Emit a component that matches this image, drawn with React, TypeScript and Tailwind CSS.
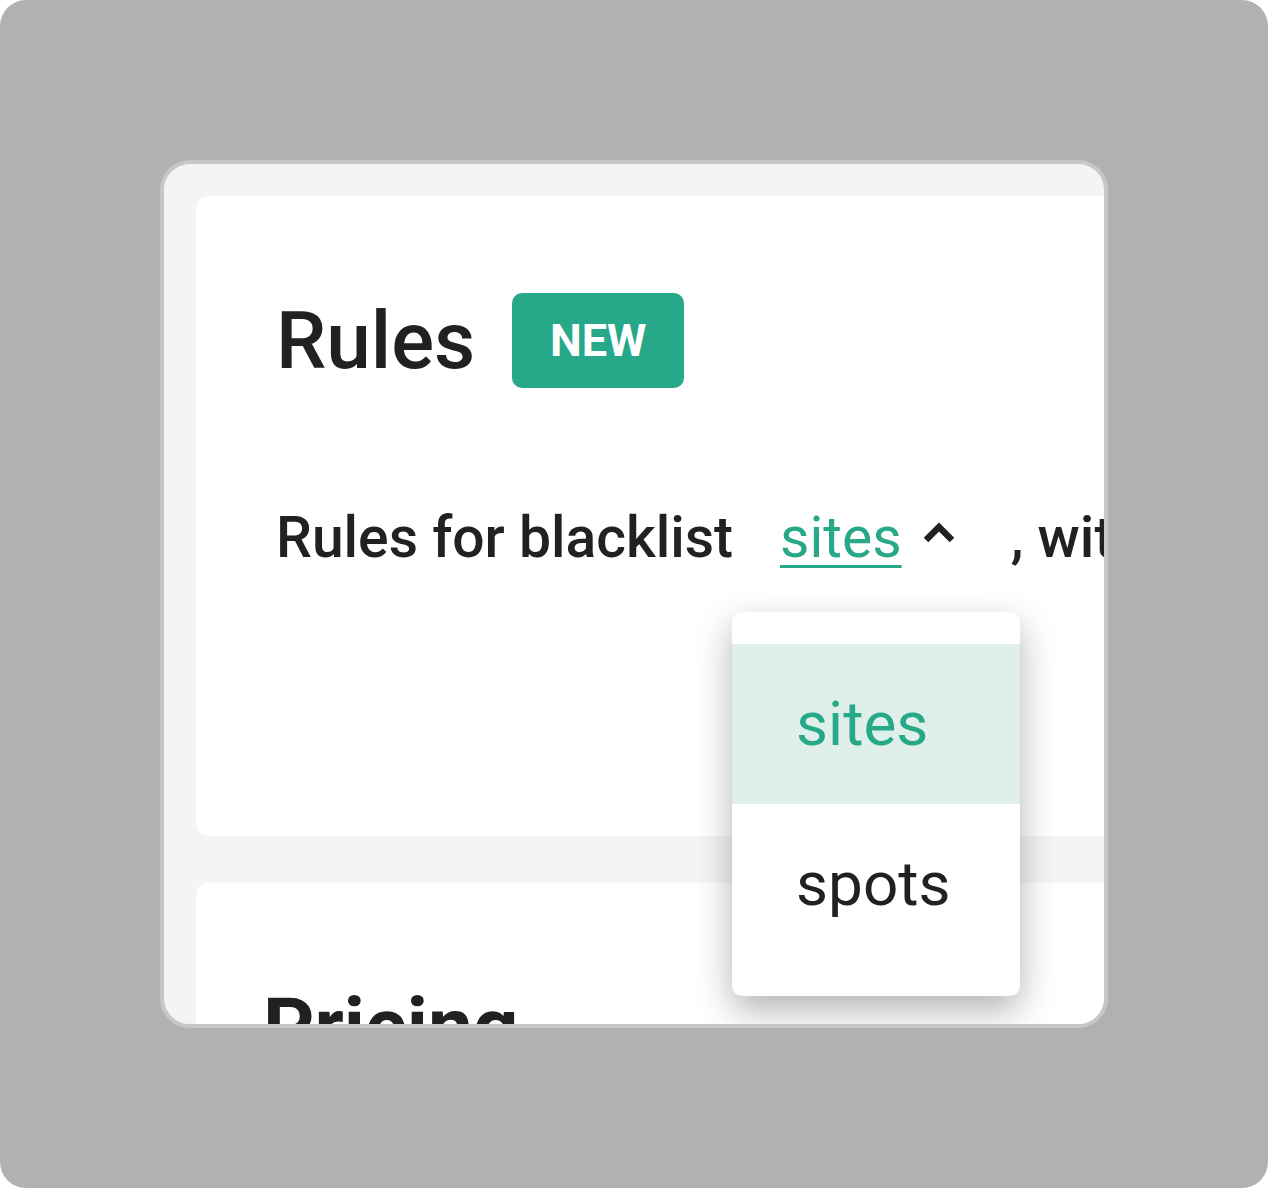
export default function App() {
  return (
    <div className="w-[1268px] h-[1188px] bg-white" style={{ fontFamily: "Roboto, 'Liberation Sans', sans-serif" }}>
      <div className="w-full h-full rounded-[26px] bg-[#b0b1b3] p-[160px]">
        {/* Card */}
        <div className="w-[948px] h-[868px] rounded-[30px] border-4 border-[#c6c7c9] bg-[#f4f4f4] overflow-hidden">
          <div className="pl-8 pt-8 w-[1300px] flex flex-col gap-[47px]">
            {/* Rules panel */}
            <div className="h-[640px] rounded-[12px] bg-white pl-[80px] pt-[97px]">
              <div className="flex items-center gap-[37px]">
                <h1 className="text-[80px] leading-none font-medium text-[#212121]">Rules</h1>
                <span className="w-[172px] h-[95px] rounded-[10px] bg-[#26a889] flex items-center justify-center text-white text-[45px] font-bold leading-none">
                  NEW
                </span>
              </div>

              <div className="mt-[121px] flex items-center whitespace-nowrap text-[57px] leading-none text-[#212121]">
                <span className="shrink-0 font-medium">Rules for blacklist</span>
                <div className="relative shrink-0 ml-[47px] flex items-center">
                  <span className="text-[#26a889] underline decoration-[3px] underline-offset-[8px]">sites</span>
                  <svg className="ml-[20px] mt-[-10px]" width="34" height="22" viewBox="0 0 34 22" fill="none">
                    <path d="M4 18L17 5L30 18" stroke="#212121" strokeWidth="6.5" strokeLinejoin="miter" />
                  </svg>

                  {/* Dropdown menu */}
                  <div className="absolute left-[-48px] top-[103px] w-[288px] rounded-[10px] bg-white py-8 shadow-[0_14px_36px_rgba(0,0,0,0.3)] z-10">
                    <div className="h-[160px] bg-[#dff0ea] pl-[64px] flex items-center text-[62px] leading-none text-[#26a889]">
                      sites
                    </div>
                    <div className="h-[160px] pl-[64px] flex items-center text-[62px] leading-none text-[#212121]">
                      spots
                    </div>
                  </div>
                </div>
                <span className="shrink-0 ml-[55px] font-medium">, with the following</span>
              </div>
            </div>

            {/* Pricing panel */}
            <div className="h-[400px] rounded-[12px] bg-white pl-[67px] pt-[104px]">
              <h2 className="text-[80px] leading-none font-bold text-[#212121]">Pricing</h2>
            </div>
          </div>
        </div>
      </div>
    </div>
  )
}
